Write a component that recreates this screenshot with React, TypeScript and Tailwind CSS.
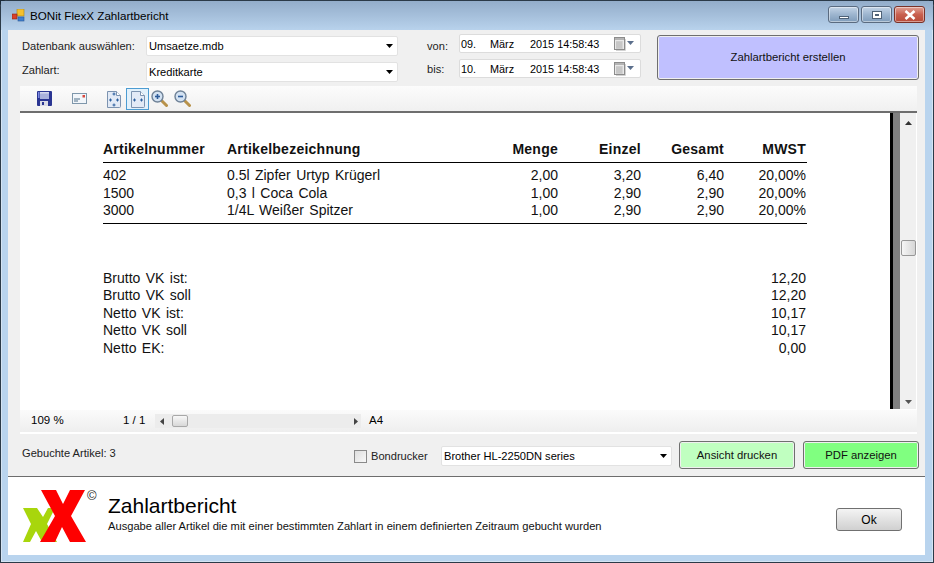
import React from "react";

const ui = "[font-family:'Liberation_Sans',Arial,sans-serif]";

function Tri({ dir = "down", color = "#000", size = 7 }: { dir?: "down" | "up" | "left" | "right"; color?: string; size?: number }) {
  const pts = { down: "0,0 7,0 3.5,4", up: "0,4 7,4 3.5,0", left: "4,0 4,7 0,3.5", right: "0,0 0,7 4,3.5" }[dir];
  const vert = dir === "down" || dir === "up";
  return (
    <svg width={vert ? size : (size * 4) / 7} height={vert ? (size * 4) / 7 : size} viewBox={vert ? "0 0 7 4" : "0 0 4 7"} className="shrink-0">
      <polygon points={pts} fill={color} />
    </svg>
  );
}

function Combo({ text, className }: { text: string; className: string }) {
  return (
    <div className={`flex items-center justify-between bg-white border border-[#e2e2e2] rounded-[2px] pl-[2px] pr-[4px] text-[11.1px] text-black ${className}`}>
      <span>{text}</span>
      <Tri />
    </div>
  );
}

function CalIcon() {
  return (
    <svg width="20" height="14" viewBox="0 0 20 14" className="shrink-0">
      <rect x="0.5" y="0.5" width="10" height="12" fill="#e9e9e9" stroke="#8c8c8c" />
      <rect x="1" y="1" width="9" height="2" fill="#b4b4b4" />
      <path d="M2 5h7M2 7h7M2 9h7M2 11h7M3 4.5v7M5 4.5v7M7 4.5v7" stroke="#a9a9a9" strokeWidth="0.6" />
      <path d="M11.5 2v11.5H2" stroke="#d2d2d2" fill="none" />
      <polygon points="13,4 20,4 16.5,8" fill="#5b6f8c" />
    </svg>
  );
}

function DatePick({ d }: { d: string }) {
  return (
    <div className="flex items-center h-[19px] w-[182px] bg-white border border-[#dcdcdc] rounded-[2px] text-[10.85px] leading-[13px] text-black pl-[1px]">
      <span className="w-[29px] mt-[1px]">{d}</span>
      <span className="w-[40px] mt-[1px]">März</span>
      <span className="w-[84px] mt-[1px]">2015 14:58:43</span>
      <CalIcon />
    </div>
  );
}

function WinBtn({ className, children }: { className: string; children: React.ReactNode }) {
  return (
    <div className={`h-[17px] w-[31px] flex items-center justify-center rounded-[3px] border border-[#5a6b80] shadow-[inset_0_0_0_1px_rgba(255,255,255,0.45)] ${className}`}>{children}</div>
  );
}

function Btn({ text, className }: { text: string; className: string }) {
  return (
    <div className={`flex items-center justify-center rounded-[3px] border border-[#6f6f6f] shadow-[inset_0_0_0_1px_#efefef] text-[11.3px] text-[#111] ${className}`}>{text}</div>
  );
}

const Save = () => (
  <svg width="15" height="15" viewBox="0 0 15 15">
    <rect width="15" height="15" rx="1" fill="#2a3592" />
    <rect x="3" y="1" width="9" height="7" fill="#a9b1dc" />
    <rect x="3" y="1" width="9" height="1.5" fill="#d5d9ee" />
    <rect x="3" y="10" width="8" height="5" fill="#d9dbe6" />
    <rect x="5" y="11" width="2" height="3" fill="#2a3592" />
    <rect x="1" y="1" width="1.5" height="6" fill="#7d8ae0" />
  </svg>
);
const Mail = () => (
  <svg width="15" height="11" viewBox="0 0 15 11">
    <rect x="0.5" y="0.5" width="14" height="10" fill="#f2f6fa" stroke="#7f97ab" />
    <path d="M2 6h6M2 8h4" stroke="#51708a" />
    <rect x="10.5" y="2" width="2.5" height="2.5" fill="#d8483c" />
  </svg>
);
const Page = ({ four }: { four?: boolean }) => (
  <svg width="14" height="18" viewBox="0 0 14 18">
    <path d="M0.5 1.5h9l4 4v11a1 1 0 0 1-1 1h-12z" fill="#e2eaf6" stroke="#7c93b0" />
    <path d="M9.5 1.5v4h4" fill="#fff" stroke="#7c93b0" />
    <path d="M2 10h3M3.5 8.5v3M9 10h3M10.5 8.5v3" stroke="#2b5f9e" strokeWidth="1" />
    {four && <path d="M5.5 4h3M7 2.5v3M5.5 15h3M7 13.5v3" stroke="#2b5f9e" strokeWidth="1" />}
  </svg>
);
const Zoom = ({ plus }: { plus?: boolean }) => (
  <svg width="17" height="17" viewBox="0 0 17 17">
    <path d="M10.5 10.5l5 5" stroke="#b8924a" strokeWidth="3" strokeLinecap="round" />
    <circle cx="6.5" cy="6.5" r="5.5" fill="#d3e2f2" stroke="#6f8297" strokeWidth="1.4" />
    <path d="M4 6.5h5" stroke="#2d5c9a" strokeWidth="1.6" />
    {plus && <path d="M6.5 4v5" stroke="#2d5c9a" strokeWidth="1.6" />}
  </svg>
);

const rows = [
  ["402", "0.5l Zipfer Urtyp Krügerl", "2,00", "3,20", "6,40", "20,00%"],
  ["1500", "0,3 l Coca Cola", "1,00", "2,90", "2,90", "20,00%"],
  ["3000", "1/4L Weißer Spitzer", "1,00", "2,90", "2,90", "20,00%"],
];
const cols = "grid grid-cols-[124px_231px_100px_83px_83px_82px]";
const summary = [
  ["Brutto VK ist:", "12,20"],
  ["Brutto VK soll", "12,20"],
  ["Netto VK ist:", "10,17"],
  ["Netto VK soll", "10,17"],
  ["Netto EK:", "0,00"],
];

function Report() {
  return (
    <div className="flex-1 bg-white pl-[83px] pt-[28px] text-[14px] leading-[17.5px] text-[#111] [word-spacing:1.5px]">
      <div className="w-[704px]">
        <div className={`${cols} font-bold h-[22px] tracking-[0.25px] border-b border-black`}>
          <span>Artikelnummer</span>
          <span>Artikelbezeichnung</span>
          <span className="text-right">Menge</span>
          <span className="text-right">Einzel</span>
          <span className="text-right">Gesamt</span>
          <span className="text-right">MWST</span>
        </div>
        <div className="pt-[4px] pb-[3px] border-b border-black">
          {rows.map((r) => (
            <div key={r[0]} className={cols}>
              <span>{r[0]}</span>
              <span>{r[1]}</span>
              <span className="text-right">{r[2]}</span>
              <span className="text-right">{r[3]}</span>
              <span className="text-right">{r[4]}</span>
              <span className="text-right">{r[5]}</span>
            </div>
          ))}
        </div>
        <div className="pt-[46px]">
          {summary.map((s) => (
            <div key={s[0]} className="flex justify-between pr-[1px]">
              <span>{s[0]}</span>
              <span>{s[1]}</span>
            </div>
          ))}
        </div>
      </div>
    </div>
  );
}

export default function App() {
  return (
    <div className={`w-[934px] h-[563px] bg-[#1d2c3a] ${ui} overflow-hidden`}>
      <div className="w-full h-full flex flex-col rounded-t-[7px] border border-[#2b3a48] bg-[#b9d4ee] shadow-[inset_0_0_0_1px_#d5e4f3]">
        {/* title bar */}
        <div className="h-[29px] shrink-0 flex items-center bg-gradient-to-b from-[#93adca] to-[#b8d2ec] pl-[11px] pr-[8px]">
          <svg width="13" height="13" viewBox="0 0 13 13" className="shrink-0">
            <rect x="5" y="0" width="7" height="7" fill="#f5c02e" stroke="#a98414" strokeWidth="0.6" />
            <rect x="0" y="5" width="5" height="5" fill="#d8402c" stroke="#8a2517" strokeWidth="0.6" />
            <rect x="6" y="8" width="6" height="4" fill="#3f7fd0" stroke="#2a5794" strokeWidth="0.6" />
          </svg>
          <span className="ml-[5px] text-[11.65px] text-black">BONit FlexX Zahlartbericht</span>
          <div className="ml-auto flex gap-[2px] -mt-[2px]">
            <WinBtn className="bg-gradient-to-b from-[#c3d4e6] via-[#9db5cf] to-[#7f9cba]">
              <div className="w-[10px] h-[3px] mt-[5px] bg-white border border-[#4f6277]" />
            </WinBtn>
            <WinBtn className="bg-gradient-to-b from-[#c3d4e6] via-[#9db5cf] to-[#7f9cba]">
              <div className="w-[10px] h-[8px] bg-white border border-[#4f6277] flex items-center justify-center">
                <div className="w-[4px] h-[2px] border border-[#4f6277]" />
              </div>
            </WinBtn>
            <WinBtn className="border-[#7a3228] bg-gradient-to-b from-[#e0a196] via-[#c8604f] to-[#b84a38]">
              <svg width="14" height="10" viewBox="0 0 14 10">
                <path d="M2.5 1l9 8M11.5 1l-9 8" stroke="#fff" strokeWidth="2.6" />
              </svg>
            </WinBtn>
          </div>
        </div>

        {/* client */}
        <div className="mx-[7px] w-[917px] h-[525px] shrink-0 flex flex-col bg-[#f0f0f0]">
          <div className="h-[56px] shrink-0 flex pl-[14px] text-[11.1px] leading-[13px] text-[#222]">
            <div className="pt-[6px] flex flex-col gap-[6px]">
              <div className="flex items-center h-[20px]">
                <span className="w-[124px]">Datenbank auswählen:</span>
                <Combo text="Umsaetze.mdb" className="w-[252px] h-[20px]" />
              </div>
              <div className="flex items-center h-[20px]">
                <span className="w-[124px] -mt-[3px]">Zahlart:</span>
                <Combo text="Kreditkarte" className="w-[252px] h-[20px]" />
              </div>
            </div>
            <div className="pl-[29px] pt-[4px] flex flex-col gap-[6px]">
              <div className="flex items-center h-[19px]">
                <span className="w-[32px] pt-[6px]">von:</span>
                <DatePick d="09." />
              </div>
              <div className="flex items-center h-[19px]">
                <span className="w-[32px] pt-[1px]">bis:</span>
                <DatePick d="10." />
              </div>
            </div>
            <Btn text="Zahlartbericht erstellen" className="ml-[16px] mt-[5px] w-[262px] h-[45px] bg-[#c0c0ff]" />
          </div>

          {/* viewer */}
          <div className="ml-[12px] w-[897px] h-[348px] shrink-0 flex flex-col bg-white">
            <div className="h-[25px] shrink-0 flex items-center bg-gradient-to-b from-[#fcfcfc] to-[#f0f0f0] pl-[17px]">
              <Save />
              <div className="ml-[20px]"><Mail /></div>
              <div className="ml-[20px]"><Page four /></div>
              <div className="ml-[5px] w-[23px] h-[22px] flex items-center justify-center border border-[#4c9cd2] bg-[#e3f1fb]"><Page /></div>
              <div className="ml-[2px]"><Zoom plus /></div>
              <div className="ml-[6px]"><Zoom /></div>
            </div>
            <div className="h-[2px] shrink-0 bg-[#6e6e6e]" />
            <div className="h-[296px] shrink-0 flex">
              <Report />
              <div className="w-[3px] bg-black" />
              <div className="w-[7px] bg-[#808080]" />
              <div className="w-[16px] bg-[#f0f0f0] flex flex-col items-center pt-[8px] pb-[5px]">
                <Tri dir="up" color="#333" />
                <div className="mt-[115px] w-[15px] h-[16px] rounded-[2px] border border-[#979797] bg-gradient-to-r from-[#f6f6f6] to-[#d6d6d6]" />
                <div className="flex-1" />
                <Tri dir="down" color="#555" />
              </div>
              <div className="w-px bg-white" />
            </div>
            <div className="h-[22px] shrink-0 mt-px flex items-center bg-gradient-to-b from-[#fbfbfb] to-[#eeeeee] text-[11.5px] text-black pl-[11px]">
              <span className="w-[92px]">109 %</span>
              <span className="w-[32px]">1 / 1</span>
              <div className="w-[206px] h-[14px] bg-[#ececec] flex items-center pl-[5px] pr-[3px]">
                <Tri dir="left" color="#444" />
                <div className="ml-[8px] w-[16px] h-[12px] rounded-[2px] border border-[#a8a8a8] bg-gradient-to-b from-[#f8f8f8] to-[#d8d8d8]" />
                <div className="flex-1" />
                <Tri dir="right" color="#444" />
              </div>
              <span className="ml-[8px]">A4</span>
            </div>
          </div>

          {/* bottom row */}
          <div className="h-[42px] shrink-0 flex pl-[14px] text-[11.1px] leading-[14px] text-[#222]">
            <span className="w-[332px] pt-[12px]">Gebuchte Artikel: 3</span>
            <div className="flex items-center h-[44px]">
              <div className="w-[13px] h-[13px] border border-[#8a8a8a] bg-gradient-to-br from-[#dedede] to-[#f8f8f8] shrink-0" />
              <span className="ml-[4px] w-[70px]">Bondrucker</span>
            </div>
            <div className="pt-[12px]">
              <Combo text="Brother HL-2250DN series" className="w-[231px] h-[20px]" />
            </div>
            <div className="pt-[7px] flex gap-[8px] ml-[7px]">
              <Btn text="Ansicht drucken" className="w-[116px] h-[28px] bg-[#c0ffc0]" />
              <Btn text="PDF anzeigen" className="w-[116px] h-[28px] bg-[#80ff80]" />
            </div>
          </div>

          {/* footer */}
          <div className="h-[79px] shrink-0 flex bg-white border-t border-[#6d6d6d] pl-[15px] pr-[23px]">
            <div className="relative w-[85px] h-[60px] mt-[13px] shrink-0">
              <svg width="64" height="53" viewBox="0 0 64 53" className="absolute left-0 top-0">
                <polygon points="0,18 14,18 20,27 25,18 32,18 24,34 34,52 19,52 13,41 7,52 0,52 8,34" fill="#a8d60c" />
                <polygon points="18,0 33,0 40,14 47,0 62,0 48,26 63,52 47,52 39,37 32,52 17,52 32,26" fill="#fe0000" />
              </svg>
              <span className="absolute left-[64px] -top-[4px] text-[13px] text-[#222]">©</span>
            </div>
            <div className="pt-[17px]">
              <div className="text-[21px] leading-[24px] text-black">Zahlartbericht</div>
              <div className="text-[11.15px] leading-[14px] text-[#111] mt-[1px]">Ausgabe aller Artikel die mit einer bestimmten Zahlart in einem definierten Zeitraum gebucht wurden</div>
            </div>
            <div className="flex-1" />
            <div className="pt-[31px]">
              <div className="w-[66px] h-[23px] flex items-center justify-center rounded-[3px] border border-[#707070] bg-gradient-to-b from-[#f4f4f4] to-[#d0d0d0] text-[12px] text-black">Ok</div>
            </div>
          </div>
        </div>
      </div>
    </div>
  );
}
